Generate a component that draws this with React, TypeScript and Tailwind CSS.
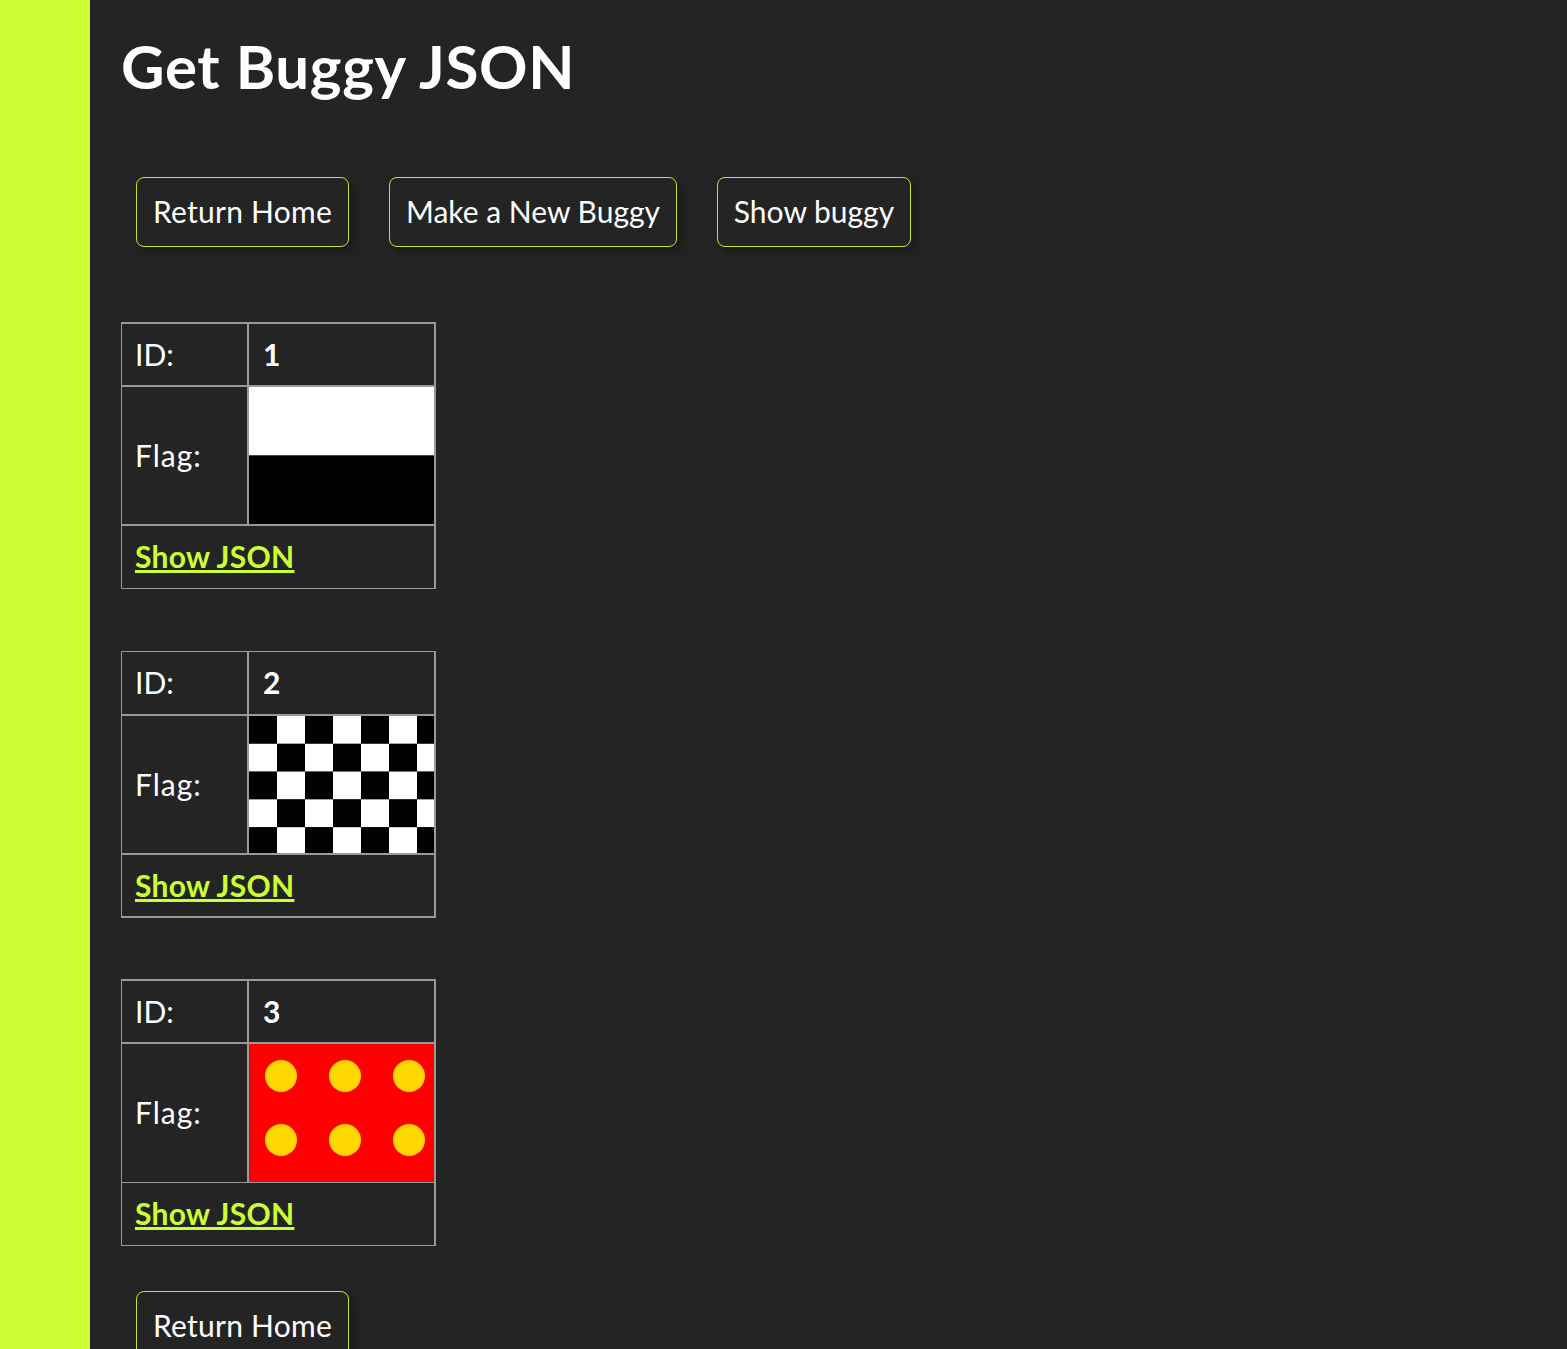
const FLAG_W = 185;

const Stripes = ({ h }: { h: number }) => (
  <svg width={FLAG_W} height={h} viewBox="0 0 185 138" preserveAspectRatio="none" className="block">
    <rect width="185" height="69" fill="#ffffff" />
    <rect y="69" width="185" height="69" fill="#000000" />
  </svg>
);

const Checks = ({ h }: { h: number }) => {
  const cells = [];
  for (let r = 0; r < 5; r++) {
    for (let c = 0; c < 7; c++) {
      cells.push(
        <rect key={`${r}-${c}`} x={c * 28} y={r * 28} width="28" height="28" fill={(r + c) % 2 === 0 ? '#000000' : '#ffffff'} />
      );
    }
  }
  return (
    <svg width={FLAG_W} height={h} viewBox="0 0 185 138" preserveAspectRatio="none" className="block">
      {cells}
    </svg>
  );
};

const Dots = ({ h }: { h: number }) => {
  const dots = [];
  for (const cy of [32, 96]) {
    for (const cx of [32, 96, 160]) {
      dots.push(<circle key={`${cx}-${cy}`} cx={cx} cy={cy} r="16" fill="#ffd700" />);
    }
  }
  return (
    <svg width={FLAG_W} height={h} viewBox="0 0 185 138" preserveAspectRatio="none" className="block">
      <rect width="185" height="138" fill="#ff0000" />
      {dots}
    </svg>
  );
};

const NavButton = ({ label, width }: { label: string; width: string }) => (
  <a className={`flex h-[70px] items-center justify-center rounded-lg border border-[#bde82f] bg-[#242424] pb-[2px] text-[30px] text-white shadow-[5px_5px_10px_rgba(0,0,0,0.3)] ${width}`}>
    {label}
  </a>
);

type Lines = { top: string; mid: string; low: string; bottom: string; row3: string };

const BuggyTable = ({ id, flag, lines }: { id: number; flag: React.ReactNode; lines: Lines }) => (
  <table className="w-[315px] table-fixed border-separate border-spacing-0">
    <tbody>
      <tr className="h-[63px]">
        <td className={`w-[126px] border-l border-[#999999] pb-[2px] pl-[13px] ${lines.top}`}>ID:</td>
        <td className={`border-x-2 border-[#999999] pb-[2px] pl-[14px] font-bold ${lines.top}`}>{id}</td>
      </tr>
      <tr className="h-[139px]">
        <td className={`border-l border-[#999999] pb-[2px] pl-[13px] tracking-[1px] ${lines.mid}`}>Flag:</td>
        <td className={`border-x-2 border-[#999999] p-0 ${lines.mid}`}>{flag}</td>
      </tr>
      <tr className={lines.row3}>
        <td colSpan={2} className={`border-r-2 border-l border-[#999999] pb-[2px] pl-[13px] ${lines.low} ${lines.bottom}`}>
          <a className="font-bold tracking-[0.3px] text-[#ccff33] underline">Show JSON</a>
        </td>
      </tr>
    </tbody>
  </table>
);

export default function App() {
  return (
    <div className="h-[1349px] overflow-hidden border-l-[90px] border-[#ccff33] bg-[#242424] pl-[31px] font-['Lato','Noto_Sans',sans-serif] text-[30px] leading-[36px] text-white">
      <h1 className="pt-[30px] text-[60px] leading-[72px] font-bold tracking-[0.7px]">Get Buggy JSON</h1>
      <div className="mt-[75px] flex gap-[40px] pl-[15px]">
        <NavButton label="Return Home" width="w-[213px] tracking-[0.25px]" />
        <NavButton label="Make a New Buggy" width="w-[288px]" />
        <NavButton label="Show buggy" width="w-[194px]" />
      </div>
      <div className="mt-[75px] flex flex-col">
        <BuggyTable
          id={1}
          flag={<Stripes h={137} />}
          lines={{ top: 'border-t-2', mid: 'border-t-2', low: 'border-t-2', bottom: 'border-b', row3: 'h-[65px]' }}
        />
        <div className="mt-[62px]">
          <BuggyTable
            id={2}
            flag={<Checks h={137} />}
            lines={{ top: 'border-t', mid: 'border-t-2', low: 'border-t-2', bottom: 'border-b-2', row3: 'h-[65px]' }}
          />
        </div>
        <div className="mt-[61px]">
          <BuggyTable
            id={3}
            flag={<Dots h={138} />}
            lines={{ top: 'border-t-2', mid: 'border-t-2', low: 'border-t', bottom: 'border-b', row3: 'h-[64px]' }}
          />
        </div>
      </div>
      <div className="mt-[45px] flex pl-[15px]">
        <NavButton label="Return Home" width="w-[213px] tracking-[0.25px]" />
      </div>
    </div>
  );
}
